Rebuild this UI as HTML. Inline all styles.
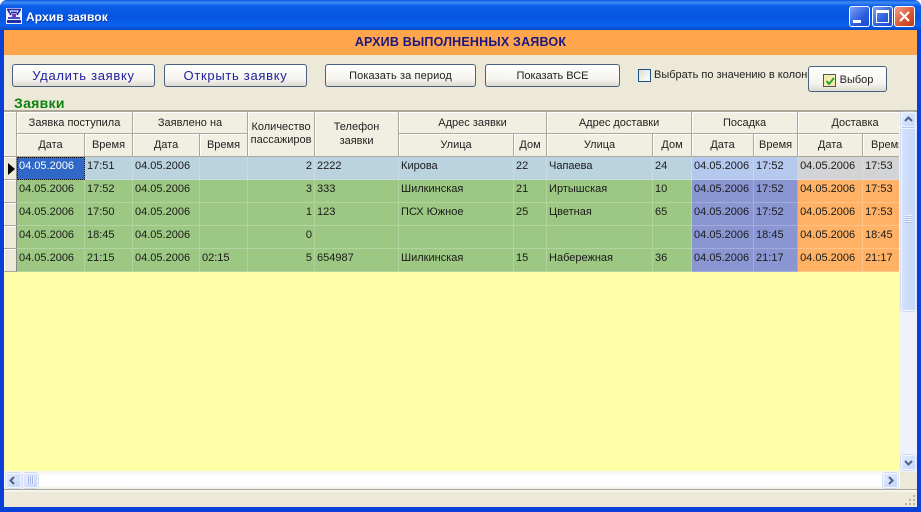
<!DOCTYPE html>
<html><head><meta charset="utf-8"><style>
html,body{margin:0;padding:0;width:921px;height:512px;overflow:hidden;background:#fff}
*{box-sizing:border-box}
body{font-family:"Liberation Sans",sans-serif;font-size:11px;color:#111;position:relative}
.a{position:absolute}
.btn{position:absolute;border:1px solid #4a6080;border-radius:3px;background:linear-gradient(#fff,#f4f3ee 70%,#dcd9ce);text-align:center;white-space:nowrap}
#win{position:absolute;left:0;top:0;width:921px;height:512px;background:#0a3fd8;border-radius:7px 7px 0 0;overflow:hidden}
#tb{position:absolute;left:0;top:0;width:921px;height:30px;background:linear-gradient(#0a58e0 0,#3f8cf5 8%,#0a5fe8 20%,#0554e0 55%,#0a62ee 85%,#0448c4 100%)}
#body{position:absolute;left:4px;top:30px;width:913px;height:477px;background:#ece9d8}
table{border-collapse:separate;border-spacing:0;table-layout:fixed;width:909px}
th{font-weight:normal;background:#f1efe2;border-right:1px solid #aca899;border-bottom:1px solid #aca899;text-align:center;padding:0;font-size:11px;color:#222;white-space:nowrap;overflow:hidden;box-shadow:inset 1px 1px 0 #fff}
td{height:23px;padding:0 0 5px 2px;font-size:11px;color:#1a1a1a;border-right:1px solid rgba(255,255,255,.22);border-bottom:1px solid rgba(255,255,255,.22);white-space:nowrap;overflow:hidden;vertical-align:middle}
.g td{background:#9dc883}
.b td{background:#bad3df}
td.h{background:#ece9d8!important;border-right:1px solid #888;border-bottom:1px solid #aca899;padding:0;box-shadow:inset 1px 1px 0 #fff}
td.p{background:#8a96d2!important}
td.o{background:#ffb265!important}
td.p1{background:#b5c8ee!important}
td.gr{background:#d2d3d4!important}
td.r{text-align:right;padding-right:2px}
td.sel{background:#2f68c6!important;color:#fff;outline:1px dotted #111;outline-offset:-1px}
.sb{position:absolute;background:linear-gradient(135deg,#e2eafc,#c6d6fb);border:1px solid #f0f4ff;border-radius:2px;box-shadow:0 0 0 .5px #b4c6ec}
</style></head><body>
<div id="win">
<div id="tb"></div>
<svg class="a" style="left:6px;top:8px" width="16" height="16" viewBox="0 0 16 16"><rect width="16" height="16" fill="#eef0ff"/><path d="M1 1.5h14M2 2l3 5M14 2l-3 5M5 4.5h6" stroke="#1c2aa8" stroke-width="1.7" fill="none"/><rect x="6" y="6" width="4" height="3" fill="#7a3ab0"/><rect x="2" y="9" width="12" height="2" fill="#4050c0"/><rect x="1" y="12" width="14" height="3" fill="#2030a8"/></svg>
<div class="a" style="left:26px;top:10px;color:#fff;font-weight:bold;font-size:12px;white-space:nowrap;letter-spacing:.1px;text-shadow:1px 1px 0 #0a3aa8">Архив заявок</div>
<div class="a" style="left:849px;top:6px;width:21px;height:21px;background:linear-gradient(135deg,#7ea2f0,#2a5ce0 60%,#2048c8);border:1px solid #fff;border-radius:3px"><div class="a" style="left:3px;top:13px;width:8px;height:3px;background:#fff"></div></div>
<div class="a" style="left:872px;top:6px;width:21px;height:21px;background:linear-gradient(135deg,#7ea2f0,#2a5ce0 60%,#2048c8);border:1px solid #fff;border-radius:3px"><div class="a" style="left:3px;top:3px;width:13px;height:13px;border:1px solid #fff;border-top:3px solid #fff"></div></div>
<div class="a" style="left:894px;top:6px;width:21px;height:21px;background:linear-gradient(135deg,#f0a088,#d8522c 60%,#c03c18);border:1px solid #fff;border-radius:3px"><svg class="a" style="left:3px;top:3px" width="13" height="13"><path d="M2 2l9 9M11 2l-9 9" stroke="#fff" stroke-width="2.2"/></svg></div>
<div id="body"></div>
<div class="a" style="left:4px;top:30px;width:913px;height:25px;background:#ffa64d"></div>
<div class="a" style="left:4px;top:35px;width:913px;text-align:center;color:#1c1880;font-weight:bold;font-size:12.5px;letter-spacing:.2px;white-space:nowrap">АРХИВ ВЫПОЛНЕННЫХ ЗАЯВОК</div>

<div class="btn" style="left:12px;top:64px;width:143px;height:23px;font-size:13px;line-height:22px;color:#2222a0;letter-spacing:.7px">Удалить заявку</div>
<div class="btn" style="left:164px;top:64px;width:143px;height:23px;font-size:13px;line-height:22px;color:#2222a0;letter-spacing:.7px">Открыть заявку</div>
<div class="btn" style="left:325px;top:64px;width:151px;height:23px;line-height:22px;color:#222;letter-spacing:.12px">Показать за период</div>
<div class="btn" style="left:485px;top:64px;width:135px;height:23px;line-height:22px;color:#222">Показать ВСЕ</div>
<div class="a" style="left:638px;top:69px;width:13px;height:13px;border:1px solid #1c5180;background:linear-gradient(135deg,#dcdcd7,#fff)"></div>
<div class="a" style="left:654px;top:69px;width:154px;overflow:hidden;white-space:nowrap;color:#222;line-height:13px">Выбрать по значению в колонке</div>
<div class="btn" style="left:808px;top:66px;width:79px;height:26px;line-height:27px;padding-left:18px;color:#222">Выбор</div>
<div class="a" style="left:823px;top:74px;width:13px;height:13px;border:1px solid #555;background:#f2eeb0"><svg class="a" style="left:1px;top:1px" width="10" height="10"><path d="M1.5 5l2.5 3 5-6" stroke="#2aa52a" stroke-width="2" fill="none"/></svg></div>
<div class="a" style="left:14px;top:95px;color:#0f800f;font-weight:bold;font-size:14px;letter-spacing:.3px;white-space:nowrap">Заявки</div>

<div class="a" style="left:4px;top:110px;width:913px;height:2px;background:#aca899"></div>
<div class="a" style="left:4px;top:112px;width:896px;height:360px;background:#ffffa8"></div>
<div class="a" style="left:4px;top:112px;width:895px;height:160px;overflow:hidden">
<table>
<colgroup><col style="width:13px"><col style="width:68px"><col style="width:48px"><col style="width:67px"><col style="width:48px"><col style="width:67px"><col style="width:84px"><col style="width:115px"><col style="width:33px"><col style="width:106px"><col style="width:39px"><col style="width:62px"><col style="width:44px"><col style="width:65px"><col style="width:50px"></colgroup>
<tr style="height:22px"><th rowspan="2"></th><th colspan="2">Заявка поступила</th><th colspan="2">Заявлено на</th><th rowspan="2" style="line-height:13px">Количество<br>пассажиров</th><th rowspan="2" style="line-height:14px">Телефон<br>заявки</th><th colspan="2">Адрес заявки</th><th colspan="2">Адрес доставки</th><th colspan="2">Посадка</th><th colspan="2">Доставка</th></tr>
<tr style="height:23px"><th>Дата</th><th>Время</th><th>Дата</th><th>Время</th><th>Улица</th><th>Дом</th><th>Улица</th><th>Дом</th><th>Дата</th><th>Время</th><th>Дата</th><th>Время</th></tr>
<tr class="b"><td class="h"></td><td class="sel">04.05.2006</td><td>17:51</td><td>04.05.2006</td><td></td><td class="r">2</td><td>2222</td><td>Кирова</td><td>22</td><td>Чапаева</td><td>24</td><td class="p1">04.05.2006</td><td class="p1">17:52</td><td class="gr">04.05.2006</td><td class="gr">17:53</td></tr>
<tr class="g"><td class="h"></td><td>04.05.2006</td><td>17:52</td><td>04.05.2006</td><td></td><td class="r">3</td><td>333</td><td>Шилкинская</td><td>21</td><td>Иртышская</td><td>10</td><td class="p">04.05.2006</td><td class="p">17:52</td><td class="o">04.05.2006</td><td class="o">17:53</td></tr>
<tr class="g"><td class="h"></td><td>04.05.2006</td><td>17:50</td><td>04.05.2006</td><td></td><td class="r">1</td><td>123</td><td>ПСХ Южное</td><td>25</td><td>Цветная</td><td>65</td><td class="p">04.05.2006</td><td class="p">17:52</td><td class="o">04.05.2006</td><td class="o">17:53</td></tr>
<tr class="g"><td class="h"></td><td>04.05.2006</td><td>18:45</td><td>04.05.2006</td><td></td><td class="r">0</td><td></td><td></td><td></td><td></td><td></td><td class="p">04.05.2006</td><td class="p">18:45</td><td class="o">04.05.2006</td><td class="o">18:45</td></tr>
<tr class="g"><td class="h"></td><td>04.05.2006</td><td>21:15</td><td>04.05.2006</td><td>02:15</td><td class="r">5</td><td>654987</td><td>Шилкинская</td><td>15</td><td>Набережная</td><td>36</td><td class="p">04.05.2006</td><td class="p">21:17</td><td class="o">04.05.2006</td><td class="o">21:17</td></tr>
</table>
</div>
<svg class="a" style="left:8px;top:163px" width="7" height="12"><path d="M0 0l7 6-7 6z" fill="#000"/></svg>

<div class="a" style="left:899px;top:112px;width:18px;height:360px;background:#f0f2fb"></div>
<div class="sb" style="left:901px;top:112px;width:15px;height:15px"></div>
<div class="sb" style="left:901px;top:128px;width:15px;height:183px;background:linear-gradient(90deg,#d5e1fc,#c6d6fb)"></div>
<div class="a" style="left:905px;top:215px;width:7px;height:8px;background:repeating-linear-gradient(#eef3ff 0 1px,#aebfe8 1px 2px)"></div>
<div class="sb" style="left:901px;top:455px;width:15px;height:15px"></div>
<svg class="a" style="left:904px;top:116px" width="9" height="7"><path d="M1 5l3.5-3.5L8 5" stroke="#4d6185" stroke-width="2" fill="none"/></svg>
<svg class="a" style="left:904px;top:459px" width="9" height="7"><path d="M1 2l3.5 3.5L8 2" stroke="#4d6185" stroke-width="2" fill="none"/></svg>

<div class="a" style="left:4px;top:471px;width:896px;height:18px;background:linear-gradient(#f2f1ea,#fff 30%,#fff 75%,#f0efe6)"></div>
<div class="a" style="left:900px;top:472px;width:17px;height:17px;background:#ece9d8"></div>
<div class="sb" style="left:6px;top:473px;width:15px;height:15px"></div>
<div class="sb" style="left:23px;top:473px;width:15px;height:15px"></div>
<div class="a" style="left:27px;top:476px;width:7px;height:8px;background:repeating-linear-gradient(90deg,#eef3ff 0 1px,#9fb2e0 1px 2px)"></div>
<div class="sb" style="left:883px;top:473px;width:15px;height:15px"></div>
<svg class="a" style="left:9px;top:476px" width="7" height="9"><path d="M5 1L1.5 4.5 5 8" stroke="#4d6185" stroke-width="2" fill="none"/></svg>
<svg class="a" style="left:887px;top:476px" width="7" height="9"><path d="M2 1l3.5 3.5L2 8" stroke="#4d6185" stroke-width="2" fill="none"/></svg>
<div class="a" style="left:4px;top:489px;width:913px;height:1px;background:#a9a799"></div>
<div class="a" style="left:4px;top:490px;width:913px;height:2px;background:#f6f4ec"></div>
<svg class="a" style="left:904px;top:494px" width="12" height="12"><g fill="#b5b2a0"><rect x="9" y="1" width="2" height="2"/><rect x="5" y="5" width="2" height="2"/><rect x="9" y="5" width="2" height="2"/><rect x="1" y="9" width="2" height="2"/><rect x="5" y="9" width="2" height="2"/><rect x="9" y="9" width="2" height="2"/></g></svg>
</div>
</body></html>
